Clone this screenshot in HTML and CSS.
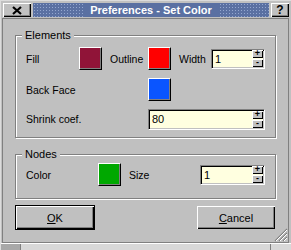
FILE: index.html
```html
<!DOCTYPE html>
<html>
<head>
<meta charset="utf-8">
<link rel="stylesheet" href="styles.css">
</head>
<body>
<div class="window">
  <div class="titlebar">
    <div class="tb-btn close">
      <svg width="10" height="9" viewBox="0 0 10 9"><path d="M1 1 L9 8 M9 1 L1 8" stroke="#000" stroke-width="2.2" fill="none"/></svg>
    </div>
    <div class="title"><span class="title-text">Preferences - Set Color</span></div>
    <div class="tb-btn help">?</div>
  </div>
  <div class="client">
    <fieldset class="group">
      <legend>Elements</legend>
      <div class="grid elements">
        <span class="lbl">Fill</span>
        <span class="swatch fill"></span>
        <span class="lbl pad">Outline</span>
        <span class="swatch outline"></span>
        <span class="lbl pad">Width</span>
        <span class="spin"><span class="val">1</span><span class="arrows"><span class="ab">+</span><span class="ab">-</span></span></span>

        <span class="lbl">Back Face</span>
        <span></span><span></span>
        <span class="swatch back"></span>
        <span></span><span></span>

        <span class="lbl">Shrink coef.</span>
        <span></span><span></span>
        <span class="spin wide"><span class="val">80</span><span class="arrows"><span class="ab">+</span><span class="ab">-</span></span></span>
      </div>
    </fieldset>
    <fieldset class="group nodes-group">
      <legend>Nodes</legend>
      <div class="grid nodes">
        <span class="lbl">Color</span>
        <span class="swatch green"></span>
        <span class="lbl pad">Size</span>
        <span class="spin"><span class="val">1</span><span class="arrows"><span class="ab">+</span><span class="ab">-</span></span></span>
      </div>
    </fieldset>
    <div class="actions">
      <button class="btn default"><u>O</u>K</button>
      <button class="btn"><u>C</u>ancel</button>
    </div>
    <svg class="grip" width="14" height="14" viewBox="0 0 14 14">
      <path d="M13 1 L1 13 M13 5 L5 13 M13 9 L9 13" stroke="#808080" stroke-width="1.2" fill="none"/>
      <path d="M13 2 L2 13 M13 6 L6 13 M13 10 L10 13" stroke="#ffffff" stroke-width="1" fill="none"/>
    </svg>
  </div>
  <div class="statusbar">
    <span class="seg left"></span>
    <span class="seg mid"></span>
    <span class="seg right"></span>
  </div>
</div>
</body>
</html>
```

FILE: styles.css
```css
* { box-sizing: border-box; }
html, body { margin: 0; padding: 0; background: #c0c0c0; }
body {
  font-family: "Liberation Sans", Arial, sans-serif;
  font-size: 10px;
  color: #000;
}
.window {
  width: 291px;
  height: 250px;
  background: #c0c0c0;
  position: relative;
  display: flex;
  flex-direction: column;
  border-left: 1px solid #dcdcdc;
  border-top: 1px solid #dcdcdc;
}
.titlebar {
  display: flex;
  height: 17px;
  padding: 2px 2px 0 2px;
  gap: 2px;
}
.tb-btn {
  height: 14px;
  background: #c0c0c0;
  box-shadow: inset 1px 1px #fff, inset -1px -1px #000, inset -2px -2px #808080;
  display: flex;
  align-items: center;
  justify-content: center;
}
.close { width: 28px; }
.help {
  width: 18px;
  font-weight: bold;
  font-size: 12px;
  line-height: 14px;
}
.title {
  flex: 1;
  height: 14px;
  background-color: #5a70a2;
  background-image: conic-gradient(at 1px 1px, transparent 75%, #93a6cf 0);
  background-size: 3px 3px;
  background-position: 1px 1px;
  display: flex;
  justify-content: center;
  align-items: center;
}
.title-text {
  background: #5a70a2;
  color: #fff;
  font-weight: bold;
  font-size: 11px;
  line-height: 14px;
  padding: 0 6px;
}
.client {
  position: relative;
  margin: 0 2px 0 1px;
  height: 225px;
  border: 1px solid #808080;
  padding: 0 12px;
}
.group {
  margin: 10px 0 0 0;
  min-width: 0;
  border: 1px solid #808080;
  box-shadow: inset 1px 1px #fff, 1px 1px #fff;
  padding: 6px 10px 7px 10px;
}
.group legend {
  padding: 0 3px;
  margin-left: -4px;
  font-size: 11px;
  line-height: 12px;
  background: #c0c0c0;
}
.nodes-group {
  padding-top: 3px;
  padding-bottom: 12px;
}
.grid { display: grid; align-items: center; }
.elements {
  grid-template-columns: 53px 23px 46px 23px 40px 1fr;
  grid-template-rows: 23px 23px 21px;
  row-gap: 8px;
}
.elements > :nth-child(n+13) { margin-top: -1px; }
.nodes {
  grid-template-columns: 72px 23px 79px 1fr;
  grid-template-rows: 23px;
}
.lbl { white-space: nowrap; font-size: 10.5px; }
.lbl.pad { padding-left: 8px; }
.swatch {
  width: 23px;
  height: 23px;
  border: 1px solid;
  border-color: #fff #000 #000 #fff;
  box-shadow: inset -1px -1px #808080;
}
.fill { background: #901438; }
.outline { background: #ff0000; }
.back { background: #0a55ff; }
.green { background: #00a800; }
.spin {
  height: 20px;
  background: #ffffe0;
  border: 1px solid;
  border-color: #808080 #fff #fff #808080;
  box-shadow: inset 1px 1px #000, inset -1px -1px #c0c0c0;
  display: flex;
  align-items: center;
  justify-content: space-between;
  padding: 0 1px 0 3px;
}
.spin.wide {
  grid-column: 4 / 7;
  height: 21px;
}
.val { font-size: 11px; }
.arrows {
  display: flex;
  flex-direction: column;
  gap: 1px;
}
.ab {
  width: 11px;
  height: 8px;
  background: #c0c0c0;
  box-shadow: inset 1px 1px #fff, inset -1px -1px #000;
  font-size: 9px;
  font-weight: bold;
  line-height: 7px;
  text-align: center;
}
.actions {
  display: flex;
  justify-content: space-between;
  margin-top: 6px;
}
.btn {
  width: 80px;
  height: 25px;
  padding: 0;
  background: #c0c0c0;
  border: 1px solid transparent;
  box-shadow: inset 1px 1px #fff, inset -1px -1px #000, inset -2px -2px #808080;
  font-family: "Liberation Sans", Arial, sans-serif;
  font-size: 11px;
  color: #000;
}
.btn.default { border-color: #000; }
.grip {
  position: absolute;
  right: 0;
  bottom: 0;
}
.statusbar {
  flex: 1;
  display: flex;
  border-top: 1px solid #fff;
}
.seg { height: 100%; }
.seg.left { width: 20px; background: #a8a8a8; border-right: 1px solid #808080; }
.seg.mid { flex: 1; background: #d8d8d8; border-right: 1px solid #808080; }
.seg.right { width: 20px; background: #d8d8d8; }
```
